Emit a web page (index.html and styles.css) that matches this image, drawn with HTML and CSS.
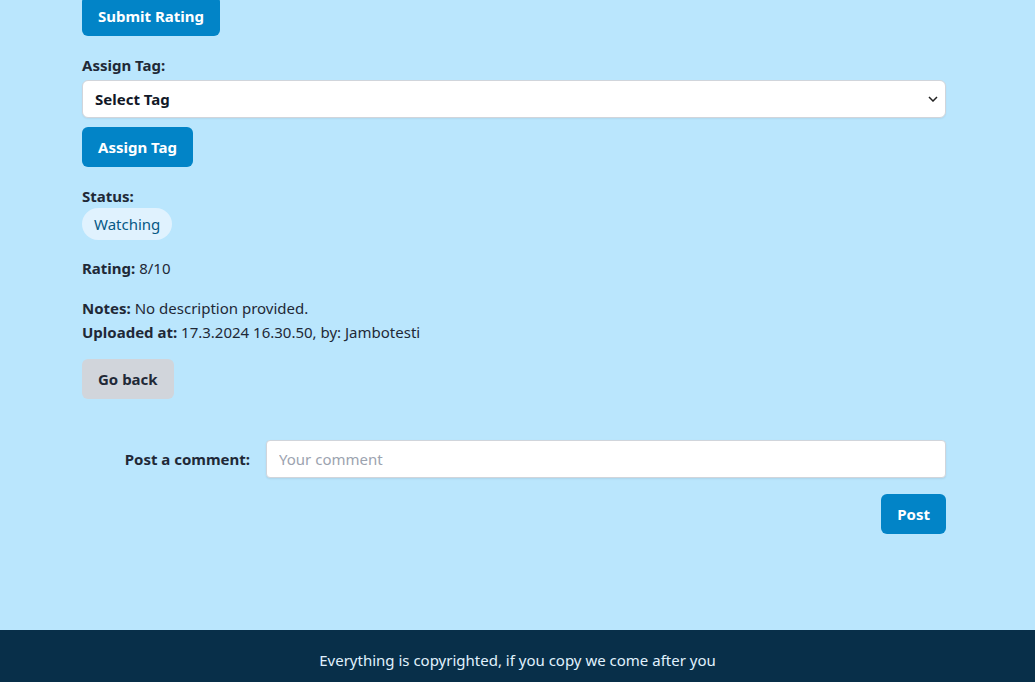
FILE: index.html
```html
<!DOCTYPE html>
<html lang="en">
<head>
<meta charset="utf-8">
<title>Item</title>
<link rel="stylesheet" href="styles.css">
</head>
<body>
<div class="page">
  <main class="container">
    <form class="block first">
      <button type="button" class="btn btn-primary">Submit Rating</button>
    </form>
    <form class="block tag-form">
      <label class="label" for="tag">Assign Tag:</label>
      <div class="select-wrap">
        <select id="tag" class="select">
          <option>Select Tag</option>
        </select>
        <svg class="chev" width="10" height="6" viewBox="0 0 10 6" aria-hidden="true"><path d="M1 1l4 4 4-4" fill="none" stroke="#222" stroke-width="1.5"/></svg>
      </div>
      <button type="button" class="btn btn-primary">Assign Tag</button>
    </form>
    <div class="status">
      <div class="label">Status:</div>
      <span class="badge">Watching</span>
    </div>
    <p class="line rating"><b>Rating:</b> 8/10</p>
    <div class="meta">
      <p class="line"><b>Notes:</b> No description provided.</p>
      <p class="line"><b>Uploaded at:</b> 17.3.2024 16.30.50, by: Jambotesti</p>
    </div>
    <div class="back-row">
      <button type="button" class="btn btn-gray">Go back</button>
    </div>
    <form class="comment-form">
      <div class="comment-row">
        <label class="comment-label" for="comment">Post a comment:</label>
        <input id="comment" class="input" type="text" placeholder="Your comment">
      </div>
      <div class="post-row">
        <button type="button" class="btn btn-primary">Post</button>
      </div>
    </form>
  </main>
  <footer class="footer">
    <p>Everything is copyrighted, if you copy we come after you</p>
  </footer>
</div>
</body>
</html>
```
FILE: styles.css
```css
* { box-sizing: border-box; }
html, body { margin: 0; padding: 0; }
body {
  background: #bae6fd;
  color: #1f2937;
  font-family: "Noto Sans", "Open Sans", sans-serif;
  font-size: 15px;
  line-height: 24px;
}
.page { display: flex; flex-direction: column; min-height: 682px; }
.container {
  width: 871px;
  padding-right: 7px;
  margin: 0 auto;
  flex: 1;
  padding-bottom: 96px;
}
.block { display: flex; flex-direction: column; align-items: flex-start; }
.first { margin-top: -4px; }
.tag-form { margin-top: 17px; }
.label { font-weight: 700; display: block; height: 24px; line-height: 24px; margin-bottom: 3px; }
.select-wrap { position: relative; width: 864px; margin-bottom: 9px; }
.select {
  display: block;
  width: 100%;
  height: 38px;
  border: 1px solid #d1d5db;
  border-radius: 6px;
  background: #fff;
  font: inherit;
  font-weight: 700;
  color: #111827;
  padding: 0 28px 0 12px;
  box-shadow: 0 1px 2px rgba(0,0,0,0.06);
  appearance: none;
  -webkit-appearance: none;
}
.chev { position: absolute; right: 8px; top: 16px; pointer-events: none; }
.btn {
  font: inherit;
  font-weight: 700;
  border: none;
  border-radius: 6px;
  height: 40px;
  padding: 0 16px;
  cursor: pointer;
}
.btn-primary { background: #0284c7; color: #fff; }
.btn-gray { background: #d1d5db; color: #1f2937; }
.status { margin-top: 17px; }
.status .label { margin-bottom: 0; }
.badge {
  display: inline-block;
  background: #e0f2fe;
  color: #075985;
  border-radius: 9999px;
  padding: 4px 12px;
  line-height: 24px;
}
.line { margin: 0; }
.rating { margin-top: 16px; }
.meta { margin-top: 16px; }
.back-row { margin-top: 15px; }
.comment-form { margin-top: 41px; }
.comment-row { display: grid; grid-template-columns: 168px 1fr; column-gap: 16px; align-items: center; }
.comment-label { font-weight: 700; text-align: right; }
.input {
  height: 38px;
  border: 1px solid #d1d5db;
  border-radius: 4px;
  background: #fff;
  font: inherit;
  padding: 0 12px;
  box-shadow: 0 1px 2px rgba(0,0,0,0.08);
  color: #1f2937;
}
.input::placeholder { color: #9ca3af; }
.post-row { display: flex; justify-content: flex-end; margin-top: 16px; }
.footer {
  background: #082f49;
  color: #e0f2fe;
  text-align: center;
  height: 52px;
}
.footer p { margin: 0; padding-top: 18px; line-height: 24px; }
```
